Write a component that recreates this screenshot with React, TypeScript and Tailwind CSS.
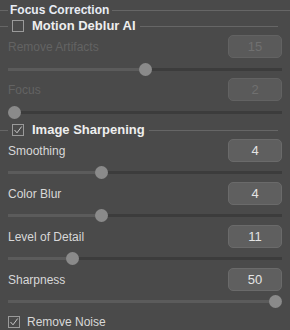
import React from "react";

const F = { fontFamily: '"Liberation Sans", Arial, sans-serif' };

function Check({ checked }: { checked?: boolean }) {
  return (
    <div className="w-[12px] h-[12px] border border-[#9a9a9a] flex items-center justify-center shrink-0">
      {checked && (
        <svg width="10" height="10" viewBox="0 0 10 10">
          <path d="M1.5 5 L4 7.8 L8.7 1.5" stroke="#c8c8c8" strokeWidth="1" fill="none" />
        </svg>
      )}
    </div>
  );
}

function Slider({ frac, h }: { frac: number; h: string }) {
  const c = 6.5 + frac * 261;
  return (
    <div className={`${h} flex items-center`}>
      <div className="relative w-full h-[3px] bg-[#3c3c3c]">
        <div className="absolute left-0 top-0 h-[3px] bg-[#5b5b5b]" style={{ width: c }} />
        <div
          className="absolute top-[-5px] w-[13px] h-[13px] rounded-full bg-[#8a8a8a]"
          style={{ left: c - 6.5 }}
        />
      </div>
    </div>
  );
}

function Item({
  label,
  value,
  frac,
  disabled,
  sliderH,
}: {
  label: string;
  value: string;
  frac: number;
  disabled?: boolean;
  sliderH: string;
}) {
  return (
    <div className="flex flex-col">
      <div className="flex items-center justify-between h-[23px]">
        <span className={`text-[12px] ${disabled ? "text-[#636363]" : "text-[#d8d8d8]"}`}>{label}</span>
        <div
          className={`w-[54px] h-[23px] rounded-[5px] border flex items-center justify-center text-[13px] ${
            disabled
              ? "bg-[#5a5a5a] border-[#626262] text-[#707070]"
              : "bg-[#5f5f5f] border-[#6a6a6a] text-[#e4e4e4]"
          }`}
        >
          {value}
        </div>
      </div>
      <Slider frac={frac} h={sliderH} />
    </div>
  );
}

function Header({ text, checked, h }: { text: string; checked?: boolean; h: string }) {
  return (
    <div className={`flex items-center ${h} -ml-[8px] pr-[4px]`}>
      <div className="w-[8px] h-px bg-[#666]" />
      <div className="w-[4px]" />
      <Check checked={checked} />
      <span className="ml-[8px] mr-[4px] text-[13px] font-bold text-[#eeeeee]">{text}</span>
      <div className="flex-1 h-px bg-[#666]" />
    </div>
  );
}

export default function App() {
  return (
    <div className="w-[290px] h-[330px] bg-[#4a4a4a] overflow-hidden" style={F}>
      <div className="flex items-center h-[20px]">
        <div className="w-[8px] h-px bg-[#666]" />
        <span className="ml-[2px] mr-[3px] text-[12px] font-bold text-[#e8ecf4]">Focus Correction</span>
        <div className="flex-1 h-px bg-[#666]" />
      </div>
      <div className="px-[8px] flex flex-col">
        <Header text="Motion Deblur AI" h="h-[12px]" />
        <div className="h-[3px]" />
        <Item label="Remove Artifacts" value="15" frac={0.5} disabled sliderH="h-[20px] pt-[2px]" />
        <Item label="Focus" value="2" frac={0} disabled sliderH="h-[20px] pt-[2px]" />
        <Header text="Image Sharpening" checked h="h-[18px]" />
        <Item label="Smoothing" value="4" frac={0.333} sliderH="h-[20px]" />
        <Item label="Color Blur" value="4" frac={0.333} sliderH="h-[20px]" />
        <Item label="Level of Detail" value="11" frac={0.222} sliderH="h-[20px]" />
        <Item label="Sharpness" value="50" frac={1} sliderH="h-[20px]" />
        <div className="flex items-center h-[22px]">
          <Check checked />
          <span className="ml-[7px] text-[12px] text-[#d8d8d8]">Remove Noise</span>
        </div>
      </div>
    </div>
  );
}
